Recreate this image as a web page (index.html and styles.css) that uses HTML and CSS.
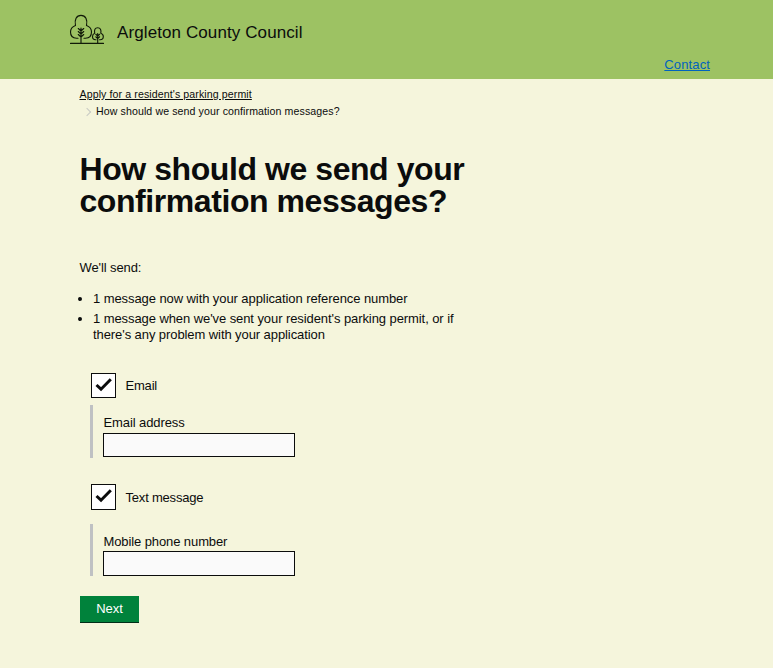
FILE: index.html
```html
<!DOCTYPE html>
<html lang="en">
<head>
<meta charset="utf-8">
<title>How should we send your confirmation messages?</title>
<link rel="stylesheet" href="styles.css">
</head>
<body>
<header class="header">
  <div class="brand">
    <svg class="logo" viewBox="0 0 36 32" width="36" height="32" fill="none" stroke="#111a08" stroke-width="1.15" stroke-linecap="round" stroke-linejoin="round">
      <path d="M1.500 29.400H34.500M12 29V14M9.300 14.500L12 17L14.700 14.500M9.300 17.500L12 20L14.700 17.500M9.300 20.500L12 23L14.700 20.500M28.700 29V19.500M26.800 20.300L28.700 22L30.600 20.300M26.800 22.800L28.700 24.500L30.600 22.800"/>
      <path d="M9 24.200H7.500C3.500 24.200 1.500 21.500 1.500 18C1.500 14.500 3.800 12.500 6.500 11.500C5.300 5.500 7.300 1.300 12 1.300S18.700 5.500 17.500 11.500C20.200 12.500 22.500 14.500 22.500 18C22.500 21.500 20.500 24.200 16.500 24.200H15M27 25.700H26.500C24.500 25.700 23.500 24.300 23.500 22.500C23.500 20.700 24.600 19.600 25.700 19.200C25 16 26 13.700 28.700 13.700S32.400 16 31.800 19.200C33.200 19.700 34.300 20.800 34.300 22.500C34.300 24.300 33.200 25.700 31.200 25.700H30.500"/>
    </svg>
    <span class="name">Argleton County Council</span>
  </div>
  <nav class="nav"><a href="#">Contact</a></nav>
</header>
<main class="main">
  <ol class="crumbs">
    <li><a href="#">Apply for a resident's parking permit</a></li>
    <li class="current">How should we send your confirmation messages?</li>
  </ol>
  <h1>How should we send your confirmation messages?</h1>
  <p class="lead">We'll send:</p>
  <ul class="list">
    <li>1 message now with your application reference number</li>
    <li>1 message when we've sent your resident's parking permit, or if there's any problem with your application</li>
  </ul>
  <form>
    <label class="choice"><span class="box"><svg viewBox="0 0 23 23" width="23" height="23"><path d="M4.500 11L9 15.200L18.800 5.300" fill="none" stroke="#0b0c0c" stroke-width="3"/></svg></span><span>Email</span></label>
    <div class="panel"><label for="email">Email address</label><input id="email" type="text"></div>
    <label class="choice second"><span class="box"><svg viewBox="0 0 23 23" width="23" height="23"><path d="M4.500 11L9 15.200L18.800 5.300" fill="none" stroke="#0b0c0c" stroke-width="3"/></svg></span><span>Text message</span></label>
    <div class="panel phone"><label for="phone">Mobile phone number</label><input id="phone" type="text"></div>
    <button class="next" type="button">Next</button>
  </form>
</main>
</body>
</html>
```
FILE: styles.css
```css
* { box-sizing: border-box; }
body { margin: 0; min-height: 668px; background: #f5f5dc; color: #0b0c0c; font: 13px/16px "Liberation Sans", Arial, sans-serif; }
.header { height: 79px; background: #9dc263; padding: 14px 63px 0 69px; }
.brand { display: flex; height: 36px; gap: 12px; }
.name { font-size: 17px; line-height: 37px; letter-spacing: 0.1px; }
.nav { display: flex; justify-content: flex-end; padding-top: 7px; }
.nav a { color: #0063be; letter-spacing: 0.12px; }
.main { padding: 7px 0 0 79.5px; }
.crumbs { list-style: none; margin: 0; padding: 0; font-size: 10.6px; line-height: 17px; letter-spacing: 0.1px; }
.crumbs a { color: inherit; }
.current { display: flex; align-items: center; }
.current::before { content: ""; width: 5px; height: 5px; border: solid #c8cac4; border-width: 1px 1px 0 0; transform: rotate(45deg); margin: 0 6px 0 4.5px; }
h1 { font-size: 32px; line-height: 32px; width: 400px; margin: 33px 0 0; letter-spacing: -0.43px; }
.lead { margin: 43px 0 0; letter-spacing: -0.1px; }
.list { margin: 15px 0 0; padding-left: 13.5px; width: 385px; letter-spacing: -0.08px; }
.list li { margin-bottom: 4px; }
form { display: flex; flex-direction: column; align-items: flex-start; padding-top: 26px; margin-left: 0.5px; }
.choice { display: flex; align-items: center; gap: 9.5px; margin-left: 11px; letter-spacing: -0.2px; }
.box { display: block; width: 25px; height: 25px; border: 1px solid #0b0c0c; background: #fff; }
.box svg { display: block; }
.panel { margin: 7px 0 0 10px; height: 53px; padding: 10px 0 0 10px; border-left: 3px solid #bfc1c3; }
.panel label { display: block; margin-bottom: 2px; padding-left: 0.5px; letter-spacing: -0.1px; }
.panel input { display: block; width: 192px; height: 24px; border: 1px solid #0b0c0c; background: #fafafa; }
.second { margin-top: 26px; }
.second .box { height: 26px; }
.second span:last-child { padding-top: 1px; }
.phone { margin-top: 14px; height: 52px; }
.phone label { margin-bottom: 1px; }
.phone input { height: 25px; }
.next { width: 59px; height: 26px; margin-top: 20px; padding: 0; border: 0; background: #00823b; color: #fff; font: inherit; box-shadow: 0 1px #002d18; }
```
